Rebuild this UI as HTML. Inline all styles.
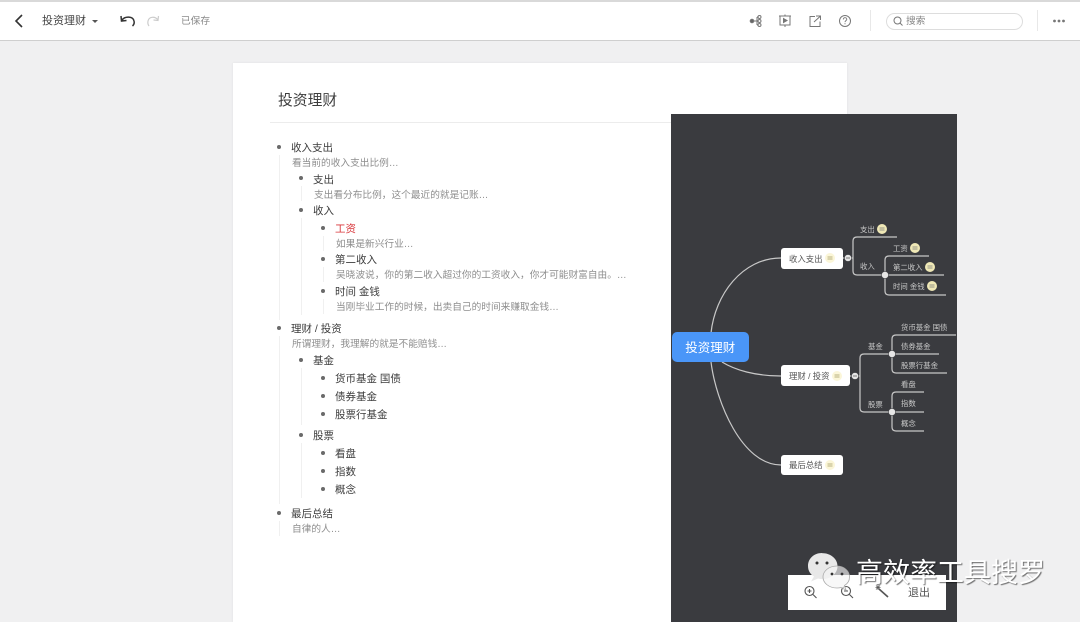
<!DOCTYPE html>
<html lang="zh"><head><meta charset="utf-8"><title>投资理财</title>
<style>
html,body{margin:0;padding:0;background:#f0f0f1}
body{width:1080px;height:622px;position:relative;overflow:hidden;font-family:"Liberation Sans","Noto Sans CJK SC",sans-serif;color:#333}
#p{position:absolute;left:0;top:0;width:1080px;height:622px;overflow:hidden;background:#f0f0f1;filter:blur(.35px)}
.a{position:absolute}
.t{position:absolute;white-space:nowrap;line-height:16px;height:16px;margin-top:-7px}
.i{font-size:10.5px;color:#3c3c3c}
.d{font-size:9.7px;color:#8e8e8e;margin-top:-6px}
.b{position:absolute;width:4px;height:4px;border-radius:50%;background:#6a6a6a;margin:-2px 0 0 -2px}
.l{position:absolute;width:1px;background:#f0f0f0}
.n{position:absolute;background:#fff;border-radius:3px}
.m{font-size:7.4px;color:#c8c8c8}
.w{font-size:8.4px;color:#555}
svg{position:absolute;overflow:visible}
</style></head><body><div id="p">
<div class="a" style="left:0;top:0;width:1080px;height:2px;background:#d9d9d9"></div>
<div class="a" style="left:0;top:2px;width:1080px;height:38px;background:#fff;border-bottom:1px solid #cfcfcf"></div>
<svg style="left:0;top:0" width="1080" height="41" fill="none">
<path d="M22 15l-6 6 6 6" stroke="#333" stroke-width="1.6"/>
<path d="M92 20h6l-3 3z" fill="#555"/>
<path d="M122 20c3-4 11-4 12 1 .5 2-.3 4-1.500 5M121 16l.5 5 5-.5" stroke="#333" stroke-width="1.500"/>
<path d="M158 20c-3-4-9-3.500-10 1-.4 2 .2 4 1 5M158.500 16l-.5 4.500-4.500-.5" stroke="#ccc" stroke-width="1.200"/>
<g stroke="#777" stroke-width="1">
<circle cx="752" cy="21" r="1.800" fill="#666"/><path d="M753 21h4M757 17v8M757 17h1M757 21h1M757 25h1"/>
<circle cx="759.500" cy="17" r="1.500"/><circle cx="759.500" cy="21" r="1.500"/><circle cx="759.500" cy="25" r="1.500"/>
<path d="M779 16h12M780 16v9h10v-9M785 14.500v1.500M785 25v2"/><path d="M783.500 18.500l3.500 2-3.500 2z" fill="#777"/>
<path d="M815 16.500h-5v10h10v-5M814 22l6-5.500M816 16h4.500v4"/>
<circle cx="845" cy="21" r="5.500"/><path d="M843.300 19.500c0-2.400 3.500-2.400 3.500-.2 0 1.300-1.800 1.300-1.800 2.800" stroke-width=".9"/><path d="M845 23.200v1"/>
<path d="M894.500 17.500m-3.500 0a3.500 3.500 0 1 0 7 0a3.500 3.500 0 1 0-7 0" transform="translate(3 3)"/><path d="M900 23l2.500 2.500"/>
</g>
<path d="M870.500 10v21M1037.500 10v21" stroke="#e8e8e8"/>
<circle cx="1054.500" cy="21" r="1.400" fill="#777"/><circle cx="1059" cy="21" r="1.400" fill="#777"/><circle cx="1063.500" cy="21" r="1.400" fill="#777"/>
</svg>
<div class="t" style="left:42px;top:20px;font-size:11px;color:#444">投资理财</div>
<div class="t" style="left:181px;top:21px;font-size:9.700px;color:#8a8a8a">已保存</div>
<div class="a" style="left:886px;top:12.500px;width:135px;height:15px;border:1px solid #ddd;border-radius:9px"></div>
<div class="t" style="left:906px;top:21px;font-size:9.700px;color:#888">搜索</div>

<div class="a" style="left:233px;top:63px;width:614px;height:559px;background:#fff;box-shadow:0 0 2px #e0e0e0"></div>
<div class="t" style="left:278px;top:100px;font-size:14.800px;color:#3d3d3d">投资理财</div>
<div class="a" style="left:270px;top:122px;width:401px;height:1px;background:#ececec"></div>

<div class="l" style="left:279px;top:155px;height:165px"></div>
<div class="l" style="left:301px;top:186px;height:15px"></div>
<div class="l" style="left:301px;top:218px;height:97px"></div>
<div class="l" style="left:323px;top:236px;height:15px"></div>
<div class="l" style="left:323px;top:267px;height:15px"></div>
<div class="l" style="left:323px;top:299px;height:15px"></div>
<div class="l" style="left:279px;top:336px;height:168px"></div>
<div class="l" style="left:301px;top:368px;height:57px"></div>
<div class="l" style="left:301px;top:443px;height:55px"></div>
<div class="l" style="left:279px;top:521px;height:15px"></div>

<div class="b" style="left:279px;top:147px"></div><div class="t i" style="left:291px;top:147px">收入支出</div>
<div class="t d" style="left:292px;top:162px">看当前的收入支出比例…</div>
<div class="b" style="left:301px;top:178px"></div><div class="t i" style="left:313px;top:179px">支出</div>
<div class="t d" style="left:314px;top:194px">支出看分布比例，这个最近的就是记账…</div>
<div class="b" style="left:301px;top:210px"></div><div class="t i" style="left:313px;top:210px">收入</div>
<div class="b" style="left:323px;top:228px"></div><div class="t i" style="left:335px;top:228px;color:#d8353a">工资</div>
<div class="t d" style="left:336px;top:243px">如果是新兴行业…</div>
<div class="b" style="left:323px;top:259px"></div><div class="t i" style="left:335px;top:259px">第二收入</div>
<div class="t d" style="left:336px;top:274px">吴晓波说，你的第二收入超过你的工资收入，你才可能财富自由。…</div>
<div class="b" style="left:323px;top:291px"></div><div class="t i" style="left:335px;top:291px">时间 金钱</div>
<div class="t d" style="left:336px;top:306px">当刚毕业工作的时候，出卖自己的时间来赚取金钱…</div>
<div class="b" style="left:279px;top:328px"></div><div class="t i" style="left:291px;top:328px">理财 / 投资</div>
<div class="t d" style="left:292px;top:343px">所谓理财，我理解的就是不能赔钱…</div>
<div class="b" style="left:301px;top:360px"></div><div class="t i" style="left:313px;top:360px">基金</div>
<div class="b" style="left:323px;top:378px"></div><div class="t i" style="left:335px;top:378px">货币基金 国债</div>
<div class="b" style="left:323px;top:396px"></div><div class="t i" style="left:335px;top:396px">债券基金</div>
<div class="b" style="left:323px;top:414px"></div><div class="t i" style="left:335px;top:414px">股票行基金</div>
<div class="b" style="left:301px;top:435px"></div><div class="t i" style="left:313px;top:435px">股票</div>
<div class="b" style="left:323px;top:453px"></div><div class="t i" style="left:335px;top:453px">看盘</div>
<div class="b" style="left:323px;top:471px"></div><div class="t i" style="left:335px;top:471px">指数</div>
<div class="b" style="left:323px;top:489px"></div><div class="t i" style="left:335px;top:489px">概念</div>
<div class="b" style="left:279px;top:513px"></div><div class="t i" style="left:291px;top:513px">最后总结</div>
<div class="t d" style="left:292px;top:528px">自律的人…</div>

<div class="a" style="left:671px;top:114px;width:286px;height:508px;background:#3a3b3f"></div>
<svg style="left:0;top:0" width="1080" height="622" fill="none">
<g stroke="#c8c8c8" stroke-width="1.200">
<path d="M711 333C715 295 742 258 781 258M722 362C735 370 755 376 781 376M711 362C716 402 742 465 781 465"/>
<path d="M843 258h10"/><path d="M897 237h-40q-4 0-4 4v30q0 4 4 4h28"/>
<path d="M929 256h-40q-4 0-4 4v31q0 4 4 4h57M885 275h59"/>
<path d="M850 376h10"/><path d="M892 354h-28q-4 0-4 4v50q0 4 4 4h28"/>
<path d="M956 335h-60q-4 0-4 4v30q0 4 4 4h51M892 354h47"/>
<path d="M924 392h-28q-4 0-4 4v31q0 4 4 4h28M892 412h32"/>
</g>
<g fill="#e6e6e6" stroke="#3a3b3f" stroke-width=".5">
<circle cx="848" cy="258" r="3.500"/><circle cx="885" cy="275" r="3.500"/><circle cx="855" cy="376" r="3.500"/><circle cx="892" cy="354" r="3.500"/><circle cx="892" cy="412" r="3.500"/>
</g>
<path d="M846 258h4M853 376h4" stroke="#555" stroke-width=".8"/>
<g fill="#efe8b6">
<circle cx="882" cy="229" r="5"/><circle cx="915" cy="248" r="5"/><circle cx="930" cy="267" r="5"/><circle cx="932" cy="286" r="5"/>
</g>
<path d="M879.500 228h5M879.500 230h5M912.500 247h5M912.500 249h5M927.500 266h5M927.500 268h5M929.500 285h5M929.500 287h5" stroke="#777" stroke-width=".7"/>
</svg>
<div class="a" style="left:671.500px;top:332px;width:77.500px;height:30px;background:#4a96f8;border-radius:5px"></div>
<div class="t" style="left:671.500px;width:77.500px;text-align:center;top:347px;font-size:12.500px;color:#fff">投资理财</div>
<div class="n" style="left:781px;top:248px;width:62px;height:21px"></div>
<div class="t w" style="left:789px;top:258px">收入支出</div>
<div class="n" style="left:781px;top:365px;width:69px;height:21px"></div>
<div class="t w" style="left:789px;top:375px">理财 / 投资</div>
<div class="n" style="left:781px;top:455px;width:62px;height:20px"></div>
<div class="t w" style="left:789px;top:464px">最后总结</div>
<svg style="left:0;top:0" width="1080" height="622"><g fill="#fbf6d8"><circle cx="830" cy="258" r="5"/><circle cx="837" cy="376" r="5"/><circle cx="830" cy="465" r="5"/></g><path d="M827.500 257h5M827.500 259h5M834.500 375h5M834.500 377h5M827.500 464h5M827.500 466h5" stroke="#a59b66" stroke-width=".8"/></svg>

<div class="t m" style="left:860px;top:229px">支出</div>
<div class="t m" style="left:860px;top:266px">收入</div>
<div class="t m" style="left:893px;top:248px">工资</div>
<div class="t m" style="left:893px;top:267px">第二收入</div>
<div class="t m" style="left:893px;top:286px">时间 金钱</div>
<div class="t m" style="left:868px;top:346px">基金</div>
<div class="t m" style="left:868px;top:404px">股票</div>
<div class="t m" style="left:901px;top:327px">货币基金 国债</div>
<div class="t m" style="left:901px;top:346px">债券基金</div>
<div class="t m" style="left:901px;top:365px">股票行基金</div>
<div class="t m" style="left:901px;top:384px">看盘</div>
<div class="t m" style="left:901px;top:403px">指数</div>
<div class="t m" style="left:901px;top:423px">概念</div>

<div class="a" style="left:788px;top:575px;width:158px;height:35px;background:#fff"></div>
<svg style="left:0;top:0" width="1080" height="622" fill="none">
<g stroke="#555" stroke-width="1.100">
<circle cx="809.500" cy="591" r="4.500"/><path d="M813 594.500l3.500 3.500M807.500 591h4M809.500 589v4"/>
<circle cx="846" cy="591" r="4.500"/><path d="M849.500 594.500l3.500 3.500M844 591h4"/>
<path d="M879 589l9 8" stroke-width="1.600"/><path d="M878 585v5M875.500 587.500h5M876 585.500l4 4M880 585.500l-4 4" stroke-width=".7"/>
</g>
<path d="M822 553c-8 0-14 5.500-14 13 0 4.500 2 8 6 10.500l-3 5 7-3c1.500.4 3 .6 4.500.6 8 0 15-5.500 15-13s-7-13-15.500-13z" fill="#e8e8e8"/>
<path d="M837 566c-8 0-14 5-14 11s6 11 14 11c1.500 0 3-.2 4-.5l5 2.500-1.500-4.500c3.500-2 5-5 5-8.500 0-6-5.500-11-12.500-11z" fill="#f4f4f4" stroke="#aaa" stroke-width=".8" fill-opacity=".65"/>
<g fill="#333"><circle cx="817" cy="563" r="1.500"/><circle cx="827" cy="563" r="1.500"/><circle cx="832" cy="574" r="1.400"/><circle cx="842" cy="574" r="1.400"/></g>
</svg>
<div class="t" style="left:908px;top:592px;font-size:11px;color:#555">退出</div>
<div class="a" style="left:856px;top:556px;line-height:34px;white-space:nowrap;font-size:27px;color:#fff;text-shadow:1px 1px 1px rgba(0,0,0,.55)">高效率工具搜罗</div>
</div></body></html>
